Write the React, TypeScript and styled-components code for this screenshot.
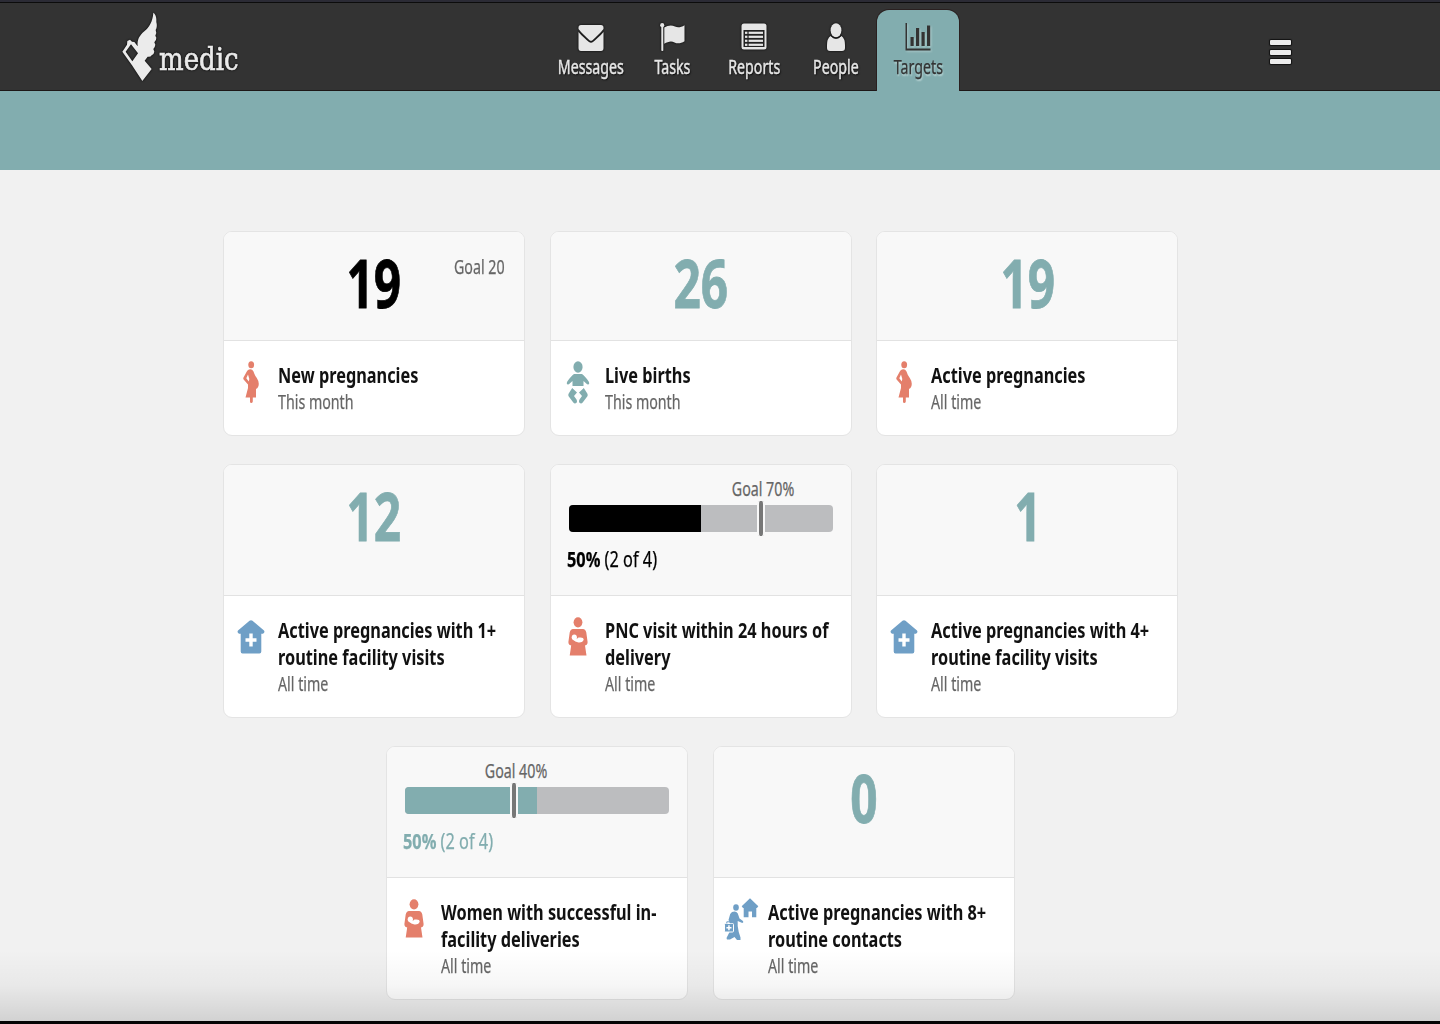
import React from "react";
import styled, { createGlobalStyle, css } from "styled-components";

const teal = "#82adaf";
const coral = "#e47f6b";
const blue = "#6f9fc6";
const CONDENSE = 0.766;
const CONDENSE_LIGHT = 0.738;

const Global = createGlobalStyle`
  * { box-sizing: border-box; }
  body { margin: 0; background: #f1f1f1; font-family: "Noto Sans", "Open Sans", sans-serif; }
`;

const Page = styled.div`
  position: relative;
  display: flex;
  flex-direction: column;
  height: 1024px;
  overflow: hidden;
  background: #f1f1f1;
`;

const Header = styled.header`
  display: grid;
  grid-template-columns: 550px 409px 1fr;
  height: 91px;
  background: #333;
  border-top: 2px solid #2b2b35;
  box-shadow: inset 0 1px 0 #0c0c0c, inset 0 -1px 0 #1d1717;
`;

const Brand = styled.div`
  display: flex;
  align-items: flex-start;
  padding: 10px 0 0 122px;
  color: #ebebeb;
  filter: drop-shadow(0 0 1px #000);
`;

const condensed = css`
  display: inline-block;
  white-space: nowrap;
  transform: scaleX(${CONDENSE});
`;

const condensedLight = css`
  display: inline-block;
  white-space: nowrap;
  transform: scaleX(${CONDENSE_LIGHT});
  -webkit-text-stroke: 0.25px currentColor;
`;

const BrandName = styled.span`
  display: block;
  margin: 25px 0 0 1px;
  font: 32.5px/44px "DejaVu Serif", serif;
  transform: scaleX(0.8);
  transform-origin: left;
  -webkit-text-stroke: 0.7px currentColor;
`;

const Nav = styled.nav`
  display: grid;
  grid-template-columns: repeat(5, minmax(0, 1fr));
  padding-top: 8px;
`;

const Tab = styled.a<{ $active?: boolean }>`
  display: flex;
  flex-direction: column;
  align-items: center;
  padding-top: 13px;
  border-radius: 12px 12px 0 0;
  color: ${(p) => (p.$active ? "#333" : "#e6e6e6")};
  background: ${(p) => (p.$active ? teal : "transparent")};
  box-shadow: ${(p) => (p.$active ? "0 0 0 1px #2a2020" : "none")};
  clip-path: inset(-2px -2px 0 -2px);
  svg {
    flex: none;
    filter: ${(p) => (p.$active ? "drop-shadow(1px 1px 1px #b0cccc)" : "drop-shadow(0 0 1px #000)")};
  }
`;

const TabLabel = styled.span<{ $active?: boolean }>`
  ${condensedLight}
  font-size: 19.3px;
  line-height: 28px;
  margin-top: 2px;
  -webkit-text-stroke-width: ${(p) => (p.$active ? 0.25 : 0.45)}px;
  text-shadow: ${(p) => (p.$active ? "1px 2px 2px #bcd6d6" : "1px 1px 2px #000")};
`;

const MenuArea = styled.div`
  display: flex;
  align-items: flex-start;
  padding: 38px 0 0 311px;
`;

const Burger = styled.div`
  display: grid;
  gap: 4.5px;
`;

const BurgerLine = styled.i`
  width: 21px;
  height: 5px;
  border-radius: 1px;
  background: #ececec;
  box-shadow: 0 0 1px 1px #111;
`;

const Banner = styled.div`
  height: 79px;
  flex: none;
  background: ${teal};
`;

const Board = styled.main`
  display: flex;
  flex-direction: column;
  align-items: center;
  gap: 27.5px;
  width: 955px;
  margin: 61px 0 0 223.3px;
`;

const Row = styled.section`
  display: flex;
  gap: 24.7px;
`;

const Card = styled.article`
  width: 302px;
  border: 1px solid #e4e4e4;
  border-radius: 9px;
  overflow: hidden;
  background: #fff;
`;

const Head = styled.div<{ $tall?: boolean }>`
  position: relative;
  height: ${(p) => (p.$tall ? 131.5 : 109)}px;
  border-bottom: 1px solid #e2e2e2;
  background: #f8f8f8;
  text-align: center;
`;

const Count = styled.strong<{ $color: string }>`
  ${condensed}
  padding-top: 4px;
  font-size: 66px;
  line-height: 92px;
  font-weight: 700;
  color: ${(p) => p.$color};
  transform: scaleX(0.725);
  -webkit-text-stroke: 0.8px currentColor;
`;

const CornerGoal = styled.span`
  ${condensedLight}
  position: absolute;
  top: 21px;
  right: 19.5px;
  font-size: 19.3px;
  line-height: 28px;
  color: #666;
  transform-origin: right;
`;

const Meter = styled.div`
  padding: 10px 18px 0;
  text-align: left;
`;

const GoalLine = styled.div`
  height: 30px;
`;

const GoalLabel = styled.span`
  ${condensedLight}
  margin-left: calc(var(--goal) + 6px);
  font-size: 19.3px;
  line-height: 28px;
  color: #666;
  transform: translateX(-50%) scaleX(${CONDENSE_LIGHT});
`;

const Track = styled.div`
  position: relative;
  height: 27px;
  border-radius: 4px;
  background: #bcbdbf;
`;

const Fill = styled.div<{ $color: string }>`
  width: 50%;
  height: 100%;
  border-radius: 4px 0 0 4px;
  background: ${(p) => p.$color};
`;

const Marker = styled.i`
  position: absolute;
  top: -4px;
  left: var(--goal);
  width: 8px;
  height: 35px;
  border-radius: 3px;
  border: solid #f8f8f8;
  border-width: 0 2px;
  background: #777;
`;

const Result = styled.span<{ $color: string }>`
  ${condensed}
  margin: 12px 0 0 -2px;
  font-size: 21.3px;
  line-height: 30px;
  color: ${(p) => p.$color};
  transform-origin: left;
  -webkit-text-stroke: 0.25px currentColor;
`;

const Body = styled.div`
  display: grid;
  grid-template-columns: 54px 1fr;
  padding: 20px 0 20px;
`;

const IconCell = styled.div`
  display: flex;
  justify-content: center;
  align-items: flex-start;
`;

const Copy = styled.div`
  white-space: nowrap;
`;

const Title = styled.h2`
  margin: 0;
  font-size: 21.3px;
  line-height: 27px;
  font-weight: 700;
  color: #111;
  transform: scaleX(${CONDENSE});
  transform-origin: left;
`;

const Period = styled.p`
  margin: 0;
  font-size: 19.3px;
  line-height: 27px;
  height: 27px;
  color: #666;
  transform: scaleX(${CONDENSE_LIGHT});
  transform-origin: left;
  -webkit-text-stroke: 0.25px currentColor;
`;

const Shade = styled.div`
  position: absolute;
  inset: auto 0 0;
  height: 74px;
  border-bottom: 3px solid #050505;
  background: linear-gradient(rgba(0, 0, 0, 0), rgba(0, 0, 0, 0.035) 50%, rgba(0, 0, 0, 0.13));
`;

const Logo = () => (
  <svg width="36" height="70" viewBox="36 36 108 210" fill="currentColor">
    <path
      fillRule="evenodd"
      d="M130 38C138 43 140 56 139 66Q143 80 137 90Q141 98 136 107L139 113Q139 121 133 127L136 134Q135 142 130 147L133 155Q132 163 125 166Q121 172 113 170L104 182L125 207L97 243L66 196L37 155L51 134L52 123L60 119L66 125L73 126L83 139C81 119 88 107 103 94C118 81 128 65 130 38ZM47 155L67 184L84 160L63 133Z"
    />
  </svg>
);

const Mail = () => (
  <svg width="26" height="28" viewBox="0 0 26 28" fill="currentColor">
    <path d="M3 2H23Q25.500 2 25.500 4.500V6C22 10.500 18 14 14.500 17.200Q13 18.400 11.500 17.200C8 14 4 10.500.500 6V4.500Q.500 2 3 2Z" />
    <path d="M.500 9C4 13 8 16.500 11 19Q13 20.600 15 19C18 16.500 22 13 25.500 9V25Q25.500 28 23 28H3Q.500 28 .500 25Z" />
  </svg>
);

const Flag = () => (
  <svg width="25" height="28" viewBox="0 0 25 28" fill="currentColor">
    <circle cx="2.200" cy="2.200" r="2.100" />
    <rect x="1.300" y="2" width="2" height="26" rx=".8" />
    <path d="M4.300 4.500C8 2 12 1.800 15 3.600C18 5 21 4.300 24.500 2.200V18.200C21 20.500 17.500 21 14.500 19.400C11 17.600 8 18.700 4.300 20.800Z" />
  </svg>
);

const Report = () => (
  <svg width="26" height="28" viewBox="0 0 26 28">
    <rect x=".5" y=".5" width="25" height="26" rx="2.500" fill="currentColor" />
    <rect x="2.500" y="7" width="21" height="17" fill="#222" />
    {[8.7, 12.7, 16.7, 20.7].map((y) => (
      <g key={y} fill="currentColor">
        <rect x="4" y={y} width="2.400" height="2.200" />
        <rect x="7.600" y={y} width="14.400" height="2.200" />
      </g>
    ))}
  </svg>
);

const Person = () => (
  <svg width="18" height="28" viewBox="0 0 18 28" fill="currentColor">
    <path d="M3.500 13Q9 18.500 14.500 13Q18 15.500 18 22V25Q18 28 15 28H3Q0 28 0 25V22Q0 15.500 3.500 13Z" />
    <ellipse cx="9" cy="7.200" rx="5.400" ry="7" />
    <path d="M3.800 12.800Q9 18.200 14.200 12.800" fill="none" stroke="#222" strokeWidth=".8" />
  </svg>
);

const Bars = () => (
  <svg width="26" height="28" viewBox="0 0 26 28" fill="currentColor">
    <path d="M.500 0H2V25.500H25.500V27.500H.500ZM5.500 14H8.700V23H5.500ZM11 5H14.200V23H11ZM16.500 9H19.700V23H16.500ZM22 2.500H25.200V23H22Z" />
  </svg>
);

const Pregnant = () => (
  <svg width="16" height="43" viewBox="0 0 16 43" fill={coral}>
    <ellipse cx="8.200" cy="3.700" rx="2.900" ry="3.500" />
    <path
      fillRule="evenodd"
      d="M6 8.500Q9 7.500 10.500 10.500Q11.500 14 13.800 17Q16.500 21 15.500 25Q14.700 27.500 13 28V36.500H9.800V40.500Q9.500 42 8.200 42Q7 42 7 40.500V36.500H2.500L5 27V23.500L.600 18.500Q0 17.500 .500 16.500L3.800 10.500Q4.600 9 6 8.500ZM5 13.500L3.300 17.300L5.800 20.500L6.300 18Z"
    />
  </svg>
);

const Baby = () => (
  <svg width="24" height="43" viewBox="0 0 24 43" fill={teal}>
    <ellipse cx="12" cy="6" rx="4.600" ry="5.700" />
    <path d="M8 13H16Q19 15 22.700 20.500Q24 22.500 22.500 23.500Q21.500 24 20 22.300L17.500 20V25H6.500V20L4 22.300Q2.500 24 1.500 23.500Q0 22.500 1.300 20.500Q5 15 8 13Z" />
    <path d="M6.200 27L11 31.500L8 35L10.500 38.500Q11.600 40.500 10.300 42Q8.700 43.200 7.300 41.500L2.600 35.300Q2 34 2.700 32.500ZM17.800 27L13 31.500L16 35L13.500 38.500Q12.400 40.500 13.700 42Q15.300 43.200 16.700 41.500L21.400 35.300Q22 34 21.300 32.500Z" />
  </svg>
);

const House = () => (
  <svg width="28" height="38" viewBox="0 -4 28 38" fill={blue}>
    <path
      fillRule="evenodd"
      d="M12.500 .7Q14 -.3 15.500 .7L27 10.500Q28.300 12.500 26 13.800H24.300V31.500Q24.300 33.500 22.500 33.500H5.500Q3.700 33.500 3.700 31.500V13.800H2Q-.300 12.500 1 10.500ZM12.300 13.500V18.300H8.500V21.800H12.300V26.500H15.700V21.800H19.500V18.300H15.700V13.500Z"
    />
  </svg>
);

const Mother = () => (
  <svg width="20" height="40" viewBox="0 -1 20 40" fill={coral}>
    <ellipse cx="10" cy="5.300" rx="4.400" ry="5.100" />
    <path d="M5 12H15Q17.500 12.200 18.300 15.500L19.600 25Q19.700 28 17 28.500L18.500 38.500H1.700L3.200 28.500Q.300 28 .400 25L1.700 15.500Q2.500 12.200 5 12Z" />
    <g fill="#fff">
      <ellipse cx="6.300" cy="20.300" rx="2.600" ry="2.900" />
      <path d="M6 21Q8.500 22.800 10.500 20.600Q15.500 19.800 15.700 22.500Q15 25.800 10.500 25.500Q7 25 5 22.700Z" />
    </g>
  </svg>
);

const Walker = () => (
  <svg width="35" height="44" viewBox="0 0 35 44" fill={blue}>
    <path d="M26 .3L34.300 8.200L33 10H32.300V19.300H28V13.500H24.500V19.300H19.700V10H19L17.700 8.200Z" />
    <ellipse cx="12" cy="9.500" rx="2.800" ry="3.300" />
    <path d="M8 14Q12 12.500 13.800 15.500L15.500 20.500L19 23Q20 24.500 18.300 25L13.700 23V28Q14.500 35 16.500 39.500V42H13L10.500 39L6 41.500H3L2.500 40L5.500 34V24L4.500 22L6.200 16Z" />
    <rect x=".5" y="25.500" width="9" height="8.500" rx="1" stroke="#fff" />
    <path d="M2.800 25.500V23.800H7V25.500" fill="none" stroke={blue} />
    <path d="M4.200 27.300H5.700V29H7.500V30.500H5.700V32.200H4.200V30.500H2.400V29H4.200Z" fill="#fff" />
  </svg>
);

const tabs = [
  { name: "Messages", Icon: Mail },
  { name: "Tasks", Icon: Flag },
  { name: "Reports", Icon: Report },
  { name: "People", Icon: Person },
  { name: "Targets", Icon: Bars, active: true },
];

type Target = {
  title: string[];
  period: string;
  Icon: React.FC;
  color?: string;
  count?: number;
  goal?: number;
};

const rows: Target[][] = [
  [
    { title: ["New pregnancies"], period: "This month", Icon: Pregnant, count: 19, goal: 20, color: "#000" },
    { title: ["Live births"], period: "This month", Icon: Baby, count: 26 },
    { title: ["Active pregnancies"], period: "All time", Icon: Pregnant, count: 19 },
  ],
  [
    { title: ["Active pregnancies with 1+", "routine facility visits"], period: "All time", Icon: House, count: 12 },
    { title: ["PNC visit within 24 hours of", "delivery"], period: "All time", Icon: Mother, goal: 70, color: "#000" },
    { title: ["Active pregnancies with 4+", "routine facility visits"], period: "All time", Icon: House, count: 1 },
  ],
  [
    { title: ["Women with successful in-", "facility deliveries"], period: "All time", Icon: Mother, goal: 40 },
    { title: ["Active pregnancies with 8+", "routine contacts"], period: "All time", Icon: Walker, count: 0 },
  ],
];

const TargetCard = ({ title, period, Icon, color = teal, count, goal }: Target) => (
  <Card>
    <Head $tall={title.length > 1}>
      {count !== undefined ? (
        <>
          <Count $color={color}>{count}</Count>
          {goal && <CornerGoal>Goal {goal}</CornerGoal>}
        </>
      ) : (
        <Meter style={{ "--goal": `${(goal ?? 0) + (goal === 70 ? 1.3 : -0.5)}%` } as React.CSSProperties}>
          <GoalLine>
            <GoalLabel>Goal {goal}%</GoalLabel>
          </GoalLine>
          <Track>
            <Fill $color={color} />
            <Marker />
          </Track>
          <Result $color={color}>
            <b>50%</b> (2 of 4)
          </Result>
        </Meter>
      )}
    </Head>
    <Body>
      <IconCell>
        <Icon />
      </IconCell>
      <Copy>
        {title.map((line) => (
          <Title key={line}>{line}</Title>
        ))}
        <Period>{period}</Period>
      </Copy>
    </Body>
  </Card>
);

export default function App() {
  return (
    <Page>
      <Global />
      <Header>
        <Brand>
          <Logo />
          <BrandName>medic</BrandName>
        </Brand>
        <Nav>
          {tabs.map(({ name, Icon, active }) => (
            <Tab key={name} $active={active}>
              <Icon />
              <TabLabel $active={active}>{name}</TabLabel>
            </Tab>
          ))}
        </Nav>
        <MenuArea>
          <Burger>
            <BurgerLine />
            <BurgerLine />
            <BurgerLine />
          </Burger>
        </MenuArea>
      </Header>
      <Banner />
      <Board>
        {rows.map((row, i) => (
          <Row key={i}>
            {row.map((target) => (
              <TargetCard key={target.title[0]} {...target} />
            ))}
          </Row>
        ))}
      </Board>
      <Shade />
    </Page>
  );
}
